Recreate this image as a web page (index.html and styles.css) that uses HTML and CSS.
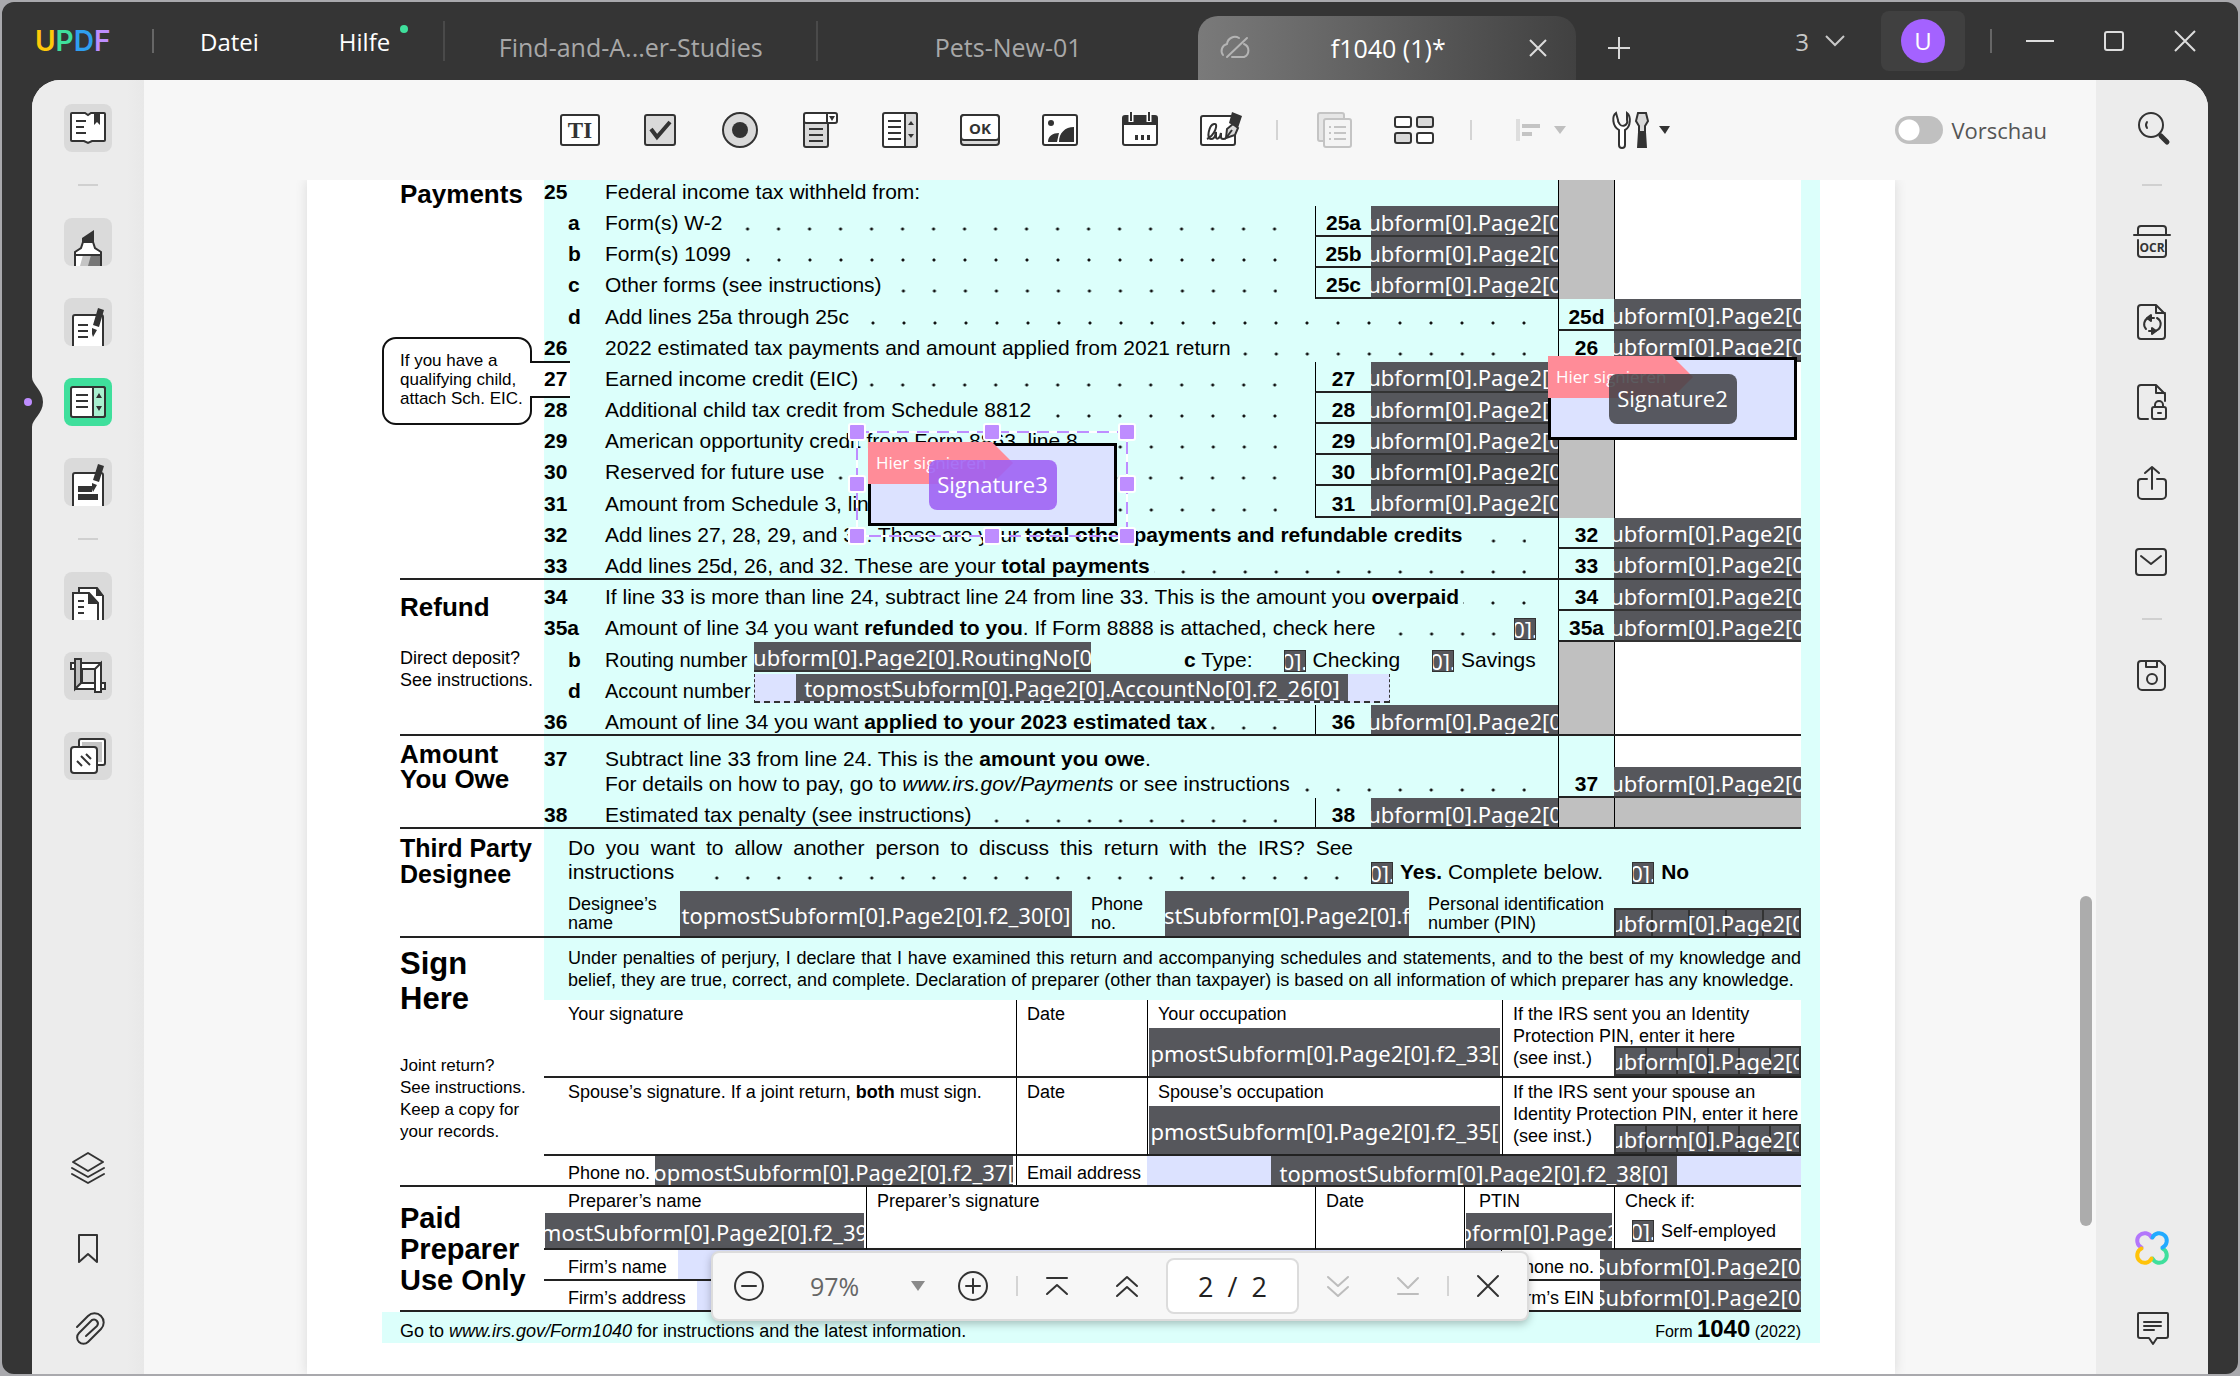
FILE: index.html
```html
<!DOCTYPE html>
<html lang="de">
<head>
    <meta charset="UTF-8">
    <meta name="viewport" content="width=device-width, initial-scale=1.0">
    <title>UPDF - f1040 (1)*</title>
    <link rel="stylesheet" href="styles.css">
</head>
<body>
<div class="window">
    <header class="titlebar">
        <div class="logo"><span class="c-u">U</span><span class="c-p">P</span><span class="c-d">D</span><span class="c-f">F</span></div>
        <span class="bar-sep"></span>
        <nav class="menu">
            <button type="button">Datei</button>
            <button type="button" class="has-dot">Hilfe</button>
        </nav>
        <div class="tabs">
            <button type="button" class="tab tab-wide">Find-and-A...er-Studies</button>
            <button type="button" class="tab">Pets-New-01</button>
            <div class="tab-active">
                <svg width="32" height="28" viewBox="0 0 32 28" fill="none" stroke="#b4b4b4" stroke-width="2" stroke-linecap="round"><path d="M20 4a8 8 0 0 0-12 6 7 7 0 0 0-4 11M8 23l20-19M25 10a7 7 0 0 1 0 13H13"/></svg>
                <button type="button" class="tab-name">f1040 (1)*</button>
                <button type="button" class="icon-btn" aria-label="Tab schließen"><svg width="18" height="18" viewBox="0 0 18 18" stroke="#ddd" stroke-width="2"><path d="M1 1l16 16M17 1L1 17"/></svg></button>
            </div>
            <button type="button" class="icon-btn add" aria-label="Neuer Tab"><svg width="24" height="24" viewBox="0 0 24 24" stroke="#d8d8d8" stroke-width="2"><path d="M12 1v22M1 12h22"/></svg></button>
        </div>
        <div class="win-ctl">
            <button type="button" class="count">3 <svg width="20" height="12" viewBox="0 0 20 12" fill="none" stroke="#c8c8c8" stroke-width="2"><path d="M1 1l9 9 9-9"/></svg></button>
            <button type="button" class="account"><span>U</span></button>
            <span class="bar-sep"></span>
            <button type="button" class="icon-btn" aria-label="Minimieren"><svg width="28" height="20" viewBox="0 0 28 20" stroke="#ddd" stroke-width="2"><path d="M0 10h28"/></svg></button>
            <button type="button" class="icon-btn" aria-label="Maximieren"><svg width="20" height="20" viewBox="0 0 20 20" fill="none" stroke="#ddd" stroke-width="2"><rect x="1" y="1" width="18" height="18" rx="2"/></svg></button>
            <button type="button" class="icon-btn" aria-label="Schließen"><svg width="22" height="22" viewBox="0 0 22 22" stroke="#ddd" stroke-width="2"><path d="M1 1l20 20M21 1L1 21"/></svg></button>
        </div>
    </header>

    <div class="body">
        <aside class="side left">
            <button type="button" class="tile" aria-label="Lesen"><svg viewBox="0 0 48 48"><path class="w" d="M8 9h13l3 2 3-2h13a1 1 0 0 1 1 1v26a1 1 0 0 1-1 1H28l-4 2-4-2H8a1 1 0 0 1-1-1V10a1 1 0 0 1 1-1z"/><path class="l" d="M12 17h10M12 23h8M12 29h10"/><path class="k" d="M30 9h6v12l-3-3-3 3z"/></svg></button>
            <span class="side-sep"></span>
            <button type="button" class="tile" aria-label="Kommentar"><svg viewBox="0 0 48 48"><path class="w" d="M11 48V34l6-4 2-6h10l2 6 6 4v14"/><path fill="#c4c4c4" d="M19 37h17v11H16z"/><path fill="#777" d="M27 37h9v11H24z"/><path class="l" d="M11 37h26"/><path class="k" d="M18 24v-4l12-8v12z"/></svg></button>
            <button type="button" class="tile" aria-label="PDF bearbeiten"><svg viewBox="0 0 48 48"><path class="w" d="M9 48V19a2 2 0 0 1 2-2h26a2 2 0 0 1 2 2v29"/><path class="l" d="M14 27h10M14 33h10M14 39h10"/><path class="k" d="M34 10l6 2-5 17-6-2zM28 30l5 2-4 7-1-3z"/></svg></button>
            <button type="button" class="tile active" aria-label="Formular"><svg viewBox="0 0 48 48"><rect class="w" x="7" y="9" width="34" height="30" rx="2"/><path fill="#a9f0d0" stroke="#333" stroke-width="2" d="M29 9h10a2 2 0 0 1 2 2v26a2 2 0 0 1-2 2H29z"/><path class="l" d="M12 17h12M12 23h12M12 29h12"/><path class="k" d="M32 20l3-5 3 5zM32 28l3 5 3-5z"/></svg></button>
            <button type="button" class="tile" aria-label="Schwärzen"><svg viewBox="0 0 48 48"><path class="w" d="M9 48V17a2 2 0 0 1 2-2h26a2 2 0 0 1 2 2v31"/><path class="k" d="M14 28h14v6H14zM14 36h20v6H14zM34 6l6 2-5 16-6-2zM28 25l5 2-4 7-1-3z"/></svg></button>
            <span class="side-sep"></span>
            <button type="button" class="tile" aria-label="Seiten"><svg viewBox="0 0 48 48"><path class="w" d="M15 48V16h18l6 8v24"/><path class="k" d="M32 15l8 9h-8z"/><path class="w" d="M9 48V21h16l9 10v17"/><path class="k" d="M24 20l10 12H24z"/><path class="l" d="M14 29h6M14 35h6M14 41h6"/></svg></button>
            <button type="button" class="tile" aria-label="Zuschneiden"><svg viewBox="0 0 48 48" fill="none" stroke="#333" stroke-width="2"><path d="M7 11h30v6H7z" fill="#fff"/><path d="M11 31h30v6H11z" fill="#fff"/><rect x="18" y="17" width="13" height="14" fill="#dadada"/><path d="M11 7h6v24l-6 6z" fill="#bdbdbd"/><path d="M31 17l6-6v29h-6z" fill="#fff"/></svg></button>
            <button type="button" class="tile" aria-label="Wasserzeichen"><svg viewBox="0 0 48 48"><rect class="w" x="15" y="7" width="26" height="26" rx="2"/><path fill="#c4c4c4" d="M18 10h20v20H18z"/><rect class="w" x="7" y="15" width="26" height="26" rx="3"/><path class="l" d="M13 29l5 5M17 24l9 9M22 22l5 5"/></svg></button>
            <span class="grow"></span>
            <button type="button" class="plain" aria-label="Ebenen"><svg viewBox="0 0 48 48" class="o"><path d="M24 9l15 9-15 9-15-9zM8 24l16 9 16-9M8 30l16 9 16-9"/></svg></button>
            <button type="button" class="plain" aria-label="Lesezeichen"><svg viewBox="0 0 48 48" class="o"><path d="M15 11h18v27l-9-8-9 8z"/></svg></button>
            <button type="button" class="plain" aria-label="Anhang"><svg viewBox="0 0 48 48" class="o"><path d="M13 23l11-11a9 9 0 0 1 13 13L24 38a6 6 0 0 1-9-9l13-13a4 4 0 0 1 5 6L22 32"/></svg></button>
            <svg class="notch" viewBox="0 0 20 50"><path fill="#353535" d="M6 0c0 8 11 13 11 25S6 42 6 50z"/><circle cx="2" cy="25" r="4" fill="#be8dff"/></svg>
        </aside>

        <main class="main">
            <div class="toolbar">
                <div class="tools">
                    <button type="button" class="plain" aria-label="Textfeld"><svg viewBox="0 0 48 48"><rect class="w" x="5" y="9" width="38" height="30" rx="2"/><text x="24" y="32" text-anchor="middle" class="ti">TI</text></svg></button>
                    <button type="button" class="plain" aria-label="Kontrollkästchen"><svg viewBox="0 0 48 48"><rect class="g" x="9" y="9" width="30" height="30" rx="2"/><path d="M15 23l6 8 13-15" fill="none" stroke="#333" stroke-width="4"/></svg></button>
                    <button type="button" class="plain" aria-label="Optionsfeld"><svg viewBox="0 0 48 48"><circle class="g" cx="24" cy="24" r="17"/><circle class="k" cx="24" cy="24" r="8"/></svg></button>
                    <button type="button" class="plain" aria-label="Dropdown-Liste"><svg viewBox="0 0 48 48"><rect class="g" x="8" y="12" width="24" height="29" rx="2"/><rect class="w" x="8" y="7" width="33" height="10" rx="2"/><path class="l" d="M31 7v10M13 23h14M13 29h14M13 35h14"/><path class="k" d="M33 10h6l-3 5z"/></svg></button>
                    <button type="button" class="plain" aria-label="Listenfeld"><svg viewBox="0 0 48 48"><rect class="w" x="7" y="7" width="34" height="34" rx="2"/><path class="g" d="M29 7h10a2 2 0 0 1 2 2v30a2 2 0 0 1-2 2H29z"/><path class="l" d="M12 15h13M12 21h13M12 27h13M12 33h13"/><path class="k" d="M32 19l3-4 3 4zM32 28l3 4 3-4z"/></svg></button>
                    <button type="button" class="plain" aria-label="Schaltfläche"><svg viewBox="0 0 48 48"><rect class="g" x="5" y="9" width="38" height="30" rx="3"/><rect class="w" x="5" y="9" width="38" height="25" rx="3"/><text x="24" y="28" text-anchor="middle" class="ok">OK</text></svg></button>
                    <button type="button" class="plain" aria-label="Bild"><svg viewBox="0 0 48 48"><rect class="w" x="7" y="9" width="34" height="30" rx="2"/><circle class="k" cx="15" cy="17" r="3"/><path class="k" d="M12 36c0-6 5-9 11-9l-2 9zM23 36c0-9 6-15 15-15v15z"/></svg></button>
                    <button type="button" class="plain" aria-label="Datum"><svg viewBox="0 0 48 48"><rect class="w" x="7" y="10" width="34" height="29" rx="2"/><path class="k" d="M7 10h34v9H7z"/><path d="M15 6v10M33 6v10" stroke="#fff" stroke-width="5"/><path class="l" d="M15 6v9M33 6v9"/><path class="k" d="M19 29h3v5h-3zM25 29h3v5h-3zM31 29h3v5h-3z"/></svg></button>
                    <button type="button" class="plain" aria-label="Signatur"><svg viewBox="0 0 48 48"><rect class="w" x="5" y="10" width="34" height="29" rx="2"/><path class="l" d="M11 33c8-4 12-16 7-15s-8 15-3 15 4-5 5-7v5c0 3 4 2 5-4v4c0 3 4 2 5 1"/><path class="g" d="M30 32l1-9 6-5 5 4-3 7z"/><path class="l" d="M30 32l6-8"/><path class="k" d="M36 6l10 4-4 12-9-5z"/></svg></button>
                </div>
                <span class="tool-sep"></span>
                <div class="tools">
                    <button type="button" class="plain" aria-label="Duplizieren"><svg viewBox="0 0 48 48" stroke="#c4c4c4" stroke-width="2"><rect x="8" y="7" width="26" height="28" rx="2" fill="#e6e6e6"/><rect x="14" y="13" width="27" height="28" rx="2" fill="#f4f4f4"/><path d="M19 21h2M19 27h2M19 33h2M24 21h12M24 27h12M24 33h12"/></svg></button>
                    <button type="button" class="plain" aria-label="Raster"><svg viewBox="0 0 48 48"><rect class="w" x="5" y="11" width="16" height="10" rx="2"/><rect class="g" x="27" y="11" width="16" height="10" rx="2"/><rect class="g" x="5" y="27" width="16" height="10" rx="2"/><rect class="w" x="27" y="27" width="16" height="10" rx="2"/></svg></button>
                </div>
                <span class="tool-sep"></span>
                <div class="tools">
                    <button type="button" class="plain with-arrow" aria-label="Ausrichten"><svg viewBox="0 0 72 48"><path d="M14 13v22" stroke="#dedede" stroke-width="4"/><path d="M18 18h18v4H18zM18 26h10v4H18z" fill="#c4c4c4"/><path d="M50 20h12l-6 8z" fill="#c0c0c0"/></svg></button>
                    <button type="button" class="plain with-arrow" aria-label="Werkzeuge"><svg viewBox="0 0 72 48"><path class="w" d="M8 7c-4 3-4 13 3 17v15a3 3 0 0 0 6 0V24c6-3 6-14 2-17v7a4 4 0 0 1-8 3 4 4 0 0 1-1-3z"/><path class="g" d="M30 7h8l2 8-3 5v6h-6v-6l-3-5z"/><path class="k" d="M30 26h8l1 16H29zM51 20h11l-5 8z"/></svg></button>
                </div>
                <label class="preview"><input type="checkbox"> Vorschau</label>
            </div>

            <div class="viewport">
                <article class="paper">
                    <div class="form">

                        <section class="part payments">
                            <div class="part-side">
                                <h2>Payments</h2>
                                <p class="callout">If you have a<br>qualifying child,<br>attach Sch. EIC.</p>
                            </div>
                            <div class="lines">
                                <div class="line"><b class="no">25</b><div class="txt wide">Federal income tax withheld from:</div><div class="shade"></div><div class="blank"></div></div>
                                <div class="line"><b class="no sub">a</b><div class="txt"><span>Form(s) W-2</span><i class="dots"></i></div><b class="box">25a</b><div class="field"><span>ubform[0].Page2[0</span></div><div class="shade"></div><div class="blank"></div></div>
                                <div class="line"><b class="no sub">b</b><div class="txt"><span>Form(s) 1099</span><i class="dots"></i></div><b class="box">25b</b><div class="field"><span>ubform[0].Page2[0</span></div><div class="shade"></div><div class="blank"></div></div>
                                <div class="line"><b class="no sub">c</b><div class="txt"><span>Other forms (see instructions)</span><i class="dots"></i></div><b class="box">25c</b><div class="field"><span>ubform[0].Page2[0</span></div><div class="shade"></div><div class="blank"></div></div>
                                <div class="line"><b class="no sub">d</b><div class="txt wide"><span>Add lines 25a through 25c</span><i class="dots"></i></div><b class="box">25d</b><div class="field"><span>ubform[0].Page2[0</span></div></div>
                                <div class="line"><b class="no">26</b><div class="txt wide"><span>2022 estimated tax payments and amount applied from 2021 return</span><i class="dots"></i></div><b class="box">26</b><div class="field"><span>ubform[0].Page2[0</span></div></div>
                                <div class="line"><b class="no">27</b><div class="txt"><span>Earned income credit (EIC)</span><i class="dots"></i></div><b class="box">27</b><div class="field"><span>ubform[0].Page2[0</span></div><div class="shade"></div><div class="blank"></div></div>
                                <div class="line"><b class="no">28</b><div class="txt"><span>Additional child tax credit from Schedule 8812</span><i class="dots"></i></div><b class="box">28</b><div class="field"><span>ubform[0].Page2[0</span></div><div class="shade"></div><div class="blank"></div></div>
                                <div class="line"><b class="no">29</b><div class="txt"><span>American opportunity credit from Form 8863, line 8</span><i class="dots"></i></div><b class="box">29</b><div class="field"><span>ubform[0].Page2[0</span></div><div class="shade"></div><div class="blank"></div></div>
                                <div class="line"><b class="no">30</b><div class="txt"><span>Reserved for future use</span><i class="dots"></i></div><b class="box">30</b><div class="field readonly"><span>ubform[0].Page2[0</span></div><div class="shade"></div><div class="blank"></div></div>
                                <div class="line"><b class="no">31</b><div class="txt"><span>Amount from Schedule 3, line 15</span><i class="dots"></i></div><b class="box">31</b><div class="field"><span>ubform[0].Page2[0</span></div><div class="shade"></div><div class="blank"></div></div>
                                <div class="line"><b class="no">32</b><div class="txt wide"><span>Add lines 27, 28, 29, and 31. These are your <b>total other payments and refundable credits</b></span><i class="dots"></i></div><b class="box">32</b><div class="field"><span>ubform[0].Page2[0</span></div></div>
                                <div class="line"><b class="no">33</b><div class="txt wide"><span>Add lines 25d, 26, and 32. These are your <b>total payments</b></span><i class="dots"></i></div><b class="box">33</b><div class="field"><span>ubform[0].Page2[0</span></div></div>
                            </div>
                        </section>

                        <section class="part refund">
                            <div class="part-side">
                                <h2>Refund</h2>
                                <p>Direct deposit?<br>See instructions.</p>
                            </div>
                            <div class="lines">
                                <div class="line"><b class="no">34</b><div class="txt wide"><span>If line 33 is more than line 24, subtract line 24 from line 33. This is the amount you <b>overpaid</b></span><i class="dots"></i></div><b class="box">34</b><div class="field"><span>ubform[0].Page2[0</span></div></div>
                                <div class="line"><b class="no">35a</b><div class="txt wide with-check"><span>Amount of line 34 you want <b>refunded to you</b>. If Form 8888 is attached, check here</span><i class="dots"></i><div class="field check"><span>0].</span></div></div><b class="box">35a</b><div class="field"><span>ubform[0].Page2[0</span></div></div>
                                <div class="line"><b class="no sub">b</b><div class="txt wide">
                                    <span class="acct">Routing number</span>
                                    <div class="field routing"><span>ubform[0].Page2[0].RoutingNo[0</span></div>
                                    <span class="type"><b>c</b> Type:</span>
                                    <div class="field check"><span>0].</span></div><span class="opt">Checking</span>
                                    <div class="field check"><span>0].</span></div><span class="opt">Savings</span>
                                </div><div class="shade"></div><div class="blank"></div></div>
                                <div class="line"><b class="no sub">d</b><div class="txt wide">
                                    <span class="acct">Account number</span>
                                    <div class="tint account-no"><div class="field hug"><span>topmostSubform[0].Page2[0].AccountNo[0].f2_26[0]</span></div></div>
                                </div><div class="shade"></div><div class="blank"></div></div>
                                <div class="line"><b class="no">36</b><div class="txt"><span>Amount of line 34 you want <b>applied to your 2023 estimated tax</b></span><i class="dots"></i></div><b class="box">36</b><div class="field"><span>ubform[0].Page2[0</span></div><div class="shade"></div><div class="blank"></div></div>
                            </div>
                        </section>

                        <section class="part owe">
                            <div class="part-side">
                                <h2>Amount<br>You Owe</h2>
                            </div>
                            <div class="lines">
                                <div class="line two-line"><b class="no">37</b><div class="txt wide"><span>Subtract line 33 from line 24. This is the <b>amount you owe</b>.</span></div><div class="box open"></div><div class="blank"></div></div>
                                <div class="line"><span class="no"></span><div class="txt wide"><span>For details on how to pay, go to <em>www.irs.gov/Payments</em> or see instructions</span><i class="dots"></i></div><b class="box">37</b><div class="field"><span>ubform[0].Page2[0</span></div></div>
                                <div class="line"><b class="no">38</b><div class="txt"><span>Estimated tax penalty (see instructions)</span><i class="dots"></i></div><b class="box">38</b><div class="field"><span>ubform[0].Page2[0</span></div><div class="shade"></div><div class="shade"></div></div>
                            </div>
                        </section>

                        <section class="part designee">
                            <div class="part-side">
                                <h2>Third Party<br>Designee</h2>
                            </div>
                            <div class="designee-main">
                                <div class="question">
                                    <div class="ask"><span class="spread">Do you want to allow another person to discuss this return with the IRS? See</span>
                                        <div class="ask-end"><span>instructions</span><i class="dots"></i></div></div>
                                    <div class="answer">
                                        <div class="field check"><span>0].</span></div><span class="yes"><b>Yes.</b> Complete below.</span>
                                        <div class="field check"><span>0].</span></div><b class="opt">No</b>
                                    </div>
                                </div>
                                <div class="who">
                                    <span class="small">Designee’s<br>name</span>
                                    <div class="field"><span>topmostSubform[0].Page2[0].f2_30[0]</span></div>
                                    <span class="small">Phone<br>no.</span>
                                    <div class="field"><span>stSubform[0].Page2[0].f</span></div>
                                    <span class="small">Personal identification<br>number (PIN)</span>
                                    <div class="field comb comb-5"><span>ubform[0].Page2[0</span></div>
                                </div>
                            </div>
                        </section>

                        <section class="part sign">
                            <div class="part-side">
                                <h2>Sign<br>Here</h2>
                                <p>Joint return?<br>See instructions.<br>Keep a copy for<br>your records.</p>
                            </div>
                            <div>
                                <div class="oath">
                                    <span class="spread">Under penalties of perjury, I declare that I have examined this return and accompanying schedules and statements, and to the best of my knowledge and</span>
                                    <span>belief, they are true, correct, and complete. Declaration of preparer (other than taxpayer) is based on all information of which preparer has any knowledge.</span>
                                </div>
                                <div class="sign-row">
                                    <div>Your signature</div>
                                    <div>Date</div>
                                    <div>Your occupation<div class="field under"><span>pmostSubform[0].Page2[0].f2_33[</span></div></div>
                                    <div>If the IRS sent you an Identity<br>Protection PIN, enter it here<br>(see inst.)<div class="field comb pin"><span>ubform[0].Page2[0</span></div></div>
                                </div>
                                <div class="sign-row">
                                    <div>Spouse’s signature. If a joint return, <b>both</b> must sign.</div>
                                    <div>Date</div>
                                    <div>Spouse’s occupation<div class="field under"><span>pmostSubform[0].Page2[0].f2_35[</span></div></div>
                                    <div>If the IRS sent your spouse an<br>Identity Protection PIN, enter it here<br>(see inst.)<div class="field comb pin"><span>ubform[0].Page2[0</span></div></div>
                                </div>
                                <div class="contact">
                                    <div class="contact-phone">Phone no.<div class="field"><span>opmostSubform[0].Page2[0].f2_37[</span></div></div>
                                    <div class="contact-mail">Email address</div>
                                    <div class="tint"><div class="field hug"><span>topmostSubform[0].Page2[0].f2_38[0]</span></div></div>
                                </div>
                            </div>
                        </section>

                        <section class="part paid">
                            <div class="part-side">
                                <h2>Paid<br>Preparer<br>Use Only</h2>
                            </div>
                            <div class="paid-main">
                                <div class="paid-row">
                                    <div>Preparer’s name<div class="field under"><span>mostSubform[0].Page2[0].f2_39</span></div></div>
                                    <div>Preparer’s signature</div>
                                    <div>Date</div>
                                    <div>PTIN<div class="field under"><span>bform[0].Page2</span></div></div>
                                    <div>Check if:<div class="self"><div class="field check"><span>0].</span></div><span class="opt">Self-employed</span></div></div>
                                </div>
                                <div class="firm"><span>Firm’s name</span><div class="tint"></div><span class="firm-r">Phone no.</span><div class="field"><span>Subform[0].Page2[0]</span></div></div>
                                <div class="firm"><span>Firm’s address</span><div class="tint"></div><span class="firm-r">Firm’s EIN</span><div class="field"><span>Subform[0].Page2[0]</span></div></div>
                            </div>
                        </section>

                        <footer class="form-foot">
                            <span>Go to <em>www.irs.gov/Form1040</em> for instructions and the latest information.</span>
                            <span class="form-id">Form <b>1040</b> (2022)</span>
                        </footer>
                    </div>

                    <!-- signature fields placed on the page -->
                    <div class="sig sig-2"><span class="sig-tag">Hier signieren</span><span class="sig-name">Signature2</span></div>
                    <div class="sig sig-3"><span class="sig-tag">Hier signieren</span><span class="sig-name">Signature3</span>
                        <svg class="handles" viewBox="0 0 290 124">
                            <rect x="10" y="10" width="270" height="104" fill="none" stroke="#fff" stroke-width="2"/>
                            <rect x="10" y="10" width="270" height="104" fill="none" stroke="#be8dff" stroke-width="2" stroke-dasharray="12 8"/>
                            <g fill="#be8dff" stroke="#fff" stroke-width="2">
                                <rect x="2" y="2" width="16" height="16" rx="2"/><rect x="137" y="2" width="16" height="16" rx="2"/><rect x="272" y="2" width="16" height="16" rx="2"/>
                                <rect x="2" y="54" width="16" height="16" rx="2"/><rect x="272" y="54" width="16" height="16" rx="2"/>
                                <rect x="2" y="106" width="16" height="16" rx="2"/><rect x="137" y="106" width="16" height="16" rx="2"/><rect x="272" y="106" width="16" height="16" rx="2"/>
                            </g>
                        </svg>
                    </div>
                </article>
                <div class="scroll-thumb"></div>
            </div>

            <div class="pager">
                <button type="button" class="icon-btn" aria-label="Verkleinern"><svg width="32" height="32" viewBox="0 0 32 32" class="o"><circle cx="16" cy="16" r="14"/><path d="M9 16h14"/></svg></button>
                <label class="zoom"><select aria-label="Zoom"><option>97%</option></select><svg width="14" height="10" viewBox="0 0 14 10"><path d="M0 0h14L7 10z" fill="#8a8a8a"/></svg></label>
                <button type="button" class="icon-btn" aria-label="Vergrößern"><svg width="32" height="32" viewBox="0 0 32 32" class="o"><circle cx="16" cy="16" r="14"/><path d="M9 16h14M16 9v14"/></svg></button>
                <span class="pager-sep"></span>
                <button type="button" class="icon-btn" aria-label="Erste Seite"><svg width="24" height="24" viewBox="0 0 24 24" class="o"><path d="M2 4h20M2 20l10-9 10 9"/></svg></button>
                <button type="button" class="icon-btn" aria-label="Vorherige Seite"><svg width="24" height="24" viewBox="0 0 24 24" class="o"><path d="M2 12L12 3l10 9M2 22l10-9 10 9"/></svg></button>
                <input class="page-no" type="text" value="2  /  2" aria-label="Seite">
                <button type="button" class="icon-btn off" aria-label="Nächste Seite"><svg width="24" height="24" viewBox="0 0 24 24" class="o"><path d="M2 3l10 9 10-9M2 13l10 9 10-9"/></svg></button>
                <button type="button" class="icon-btn off" aria-label="Letzte Seite"><svg width="24" height="24" viewBox="0 0 24 24" class="o"><path d="M2 20h20M2 4l10 10L22 4"/></svg></button>
                <span class="pager-sep"></span>
                <button type="button" class="icon-btn" aria-label="Leiste schließen"><svg width="24" height="24" viewBox="0 0 24 24" class="o"><path d="M2 2l20 20M22 2L2 22"/></svg></button>
            </div>
        </main>

        <aside class="side right">
            <button type="button" class="plain" aria-label="Suchen"><svg viewBox="0 0 48 48" class="o"><circle cx="23" cy="21" r="12"/><path d="M19 18q-2 3 0 6"/><path d="M33 32l6 6" stroke-width="5"/></svg></button>
            <span class="side-sep"></span>
            <button type="button" class="plain" aria-label="OCR"><svg viewBox="0 0 48 48" class="o"><path d="M10 16V11a3 3 0 0 1 3-3h22a3 3 0 0 1 3 3v5M6 17h36M10 22v14a3 3 0 0 0 3 3h22a3 3 0 0 0 3-3V22"/><text x="24" y="34" text-anchor="middle" class="ocr">OCR</text></svg></button>
            <button type="button" class="plain" aria-label="Konvertieren"><svg viewBox="0 0 48 48" class="o"><path d="M28 7H13a3 3 0 0 0-3 3v28a3 3 0 0 0 3 3h21a3 3 0 0 0 3-3V16zM28 7v8h9"/><path d="M18 31a7 7 0 0 1 2-11h6M29 20a7 7 0 0 1-2 13h-6"/><path fill="#333" d="M19 20l4-3v6zM28 33l-4-3v6z"/></svg></button>
            <button type="button" class="plain" aria-label="Schützen"><svg viewBox="0 0 48 48" class="o"><path d="M37 23v-7l-9-9H13a3 3 0 0 0-3 3v28a3 3 0 0 0 3 3h7M28 7v8h9"/><rect x="24" y="29" width="14" height="12" rx="2"/><path d="M27 29v-2a4 4 0 0 1 8 0v2M30 35h3"/></svg></button>
            <button type="button" class="plain" aria-label="Teilen"><svg viewBox="0 0 48 48" class="o"><path d="M19 21h-6a3 3 0 0 0-3 3v13a4 4 0 0 0 4 4h20a4 4 0 0 0 4-4V24a3 3 0 0 0-3-3h-6M24 31V9M17 15l7-6 7 6"/></svg></button>
            <button type="button" class="plain" aria-label="E-Mail"><svg viewBox="0 0 48 48" class="o"><rect x="8" y="11" width="30" height="26" rx="3"/><path d="M13 18l10 8 10-8"/></svg></button>
            <span class="side-sep"></span>
            <button type="button" class="plain" aria-label="Speichern"><svg viewBox="0 0 48 48" class="o"><path d="M13 9h19l5 5v20a4 4 0 0 1-4 4H14a4 4 0 0 1-4-4V12a3 3 0 0 1 3-3zM18 9v6h11V9"/><circle cx="24" cy="27" r="5"/></svg></button>
            <span class="grow"></span>
            <button type="button" class="plain" aria-label="UPDF AI"><svg viewBox="0 0 48 48" fill="none" stroke-width="4" stroke-linecap="round"><path stroke="#b377fb" d="M13.5 23.5A7.5 7.5 0 1 1 23.5 13.5"/><path stroke="#3fdf9c" d="M34.5 24.5A7.5 7.5 0 1 1 24.5 34.5"/><path stroke="#22aaff" d="M24.5 13.5A7.5 7.5 0 1 1 34.5 23.5"/><path stroke="#ffc30a" d="M23.5 34.5A7.5 7.5 0 1 1 13.5 24.5"/></svg></button>
            <button type="button" class="plain" aria-label="Kommentare"><svg viewBox="0 0 48 48" class="o"><path d="M11 9h28a1 1 0 0 1 1 1v22a2 2 0 0 1-2 2h-9l-4 6-4-6h-9a2 2 0 0 1-2-2V10a1 1 0 0 1 1-1zM16 18h17M16 22h17M16 26h10"/></svg></button>
        </aside>
    </div>
</div>
</body>
</html>
```
FILE: styles.css
```css
* {
    box-sizing: border-box;
}

body {
    margin: 0;
    background-color: #a9a9ad;
    font-family: "Open Sans", "Noto Sans", sans-serif;
    font-size: 24px;
    color: #333;
}

button, input, select {
    font: inherit;
    color: inherit;
    background: none;
    border: none;
    padding: 0;
    margin: 0;
}

h2, p {
    margin: 0;
}

svg {
    display: block;
    flex: none;
    overflow: visible;
}

/* icon strokes */
.w { fill: #fff; stroke: #333; stroke-width: 2; }
.g { fill: #d9d9d9; stroke: #333; stroke-width: 2; }
.k { fill: #333; }
.l { fill: none; stroke: #333; stroke-width: 2; }
.o { fill: none; stroke: #333; stroke-width: 2; stroke-linejoin: round; stroke-linecap: round; }
.ti { font: bold 23px "Liberation Serif", serif; fill: #333; }
.ok { font: bold 15px "Open Sans", sans-serif; fill: #333; }
.ocr { font: bold 12px "Open Sans", sans-serif; fill: #333; stroke: none; }

.window {
    height: 100vh;
    border: 2px solid #a9a9ad;
    border-radius: 14px;
    background-color: #353535;
    display: flex;
    flex-direction: column;
    overflow: hidden;
}

/* title bar */
.titlebar {
    height: 78px;
    flex: none;
    display: flex;
    align-items: center;
    color: #fff;
}

.logo {
    font: 600 28px Inter, sans-serif;
    margin-left: 33px;
    width: 117px;
}

.c-u { color: #ffc90a; }
.c-p { color: #3fdf9c; }
.c-d { color: #2f9ff0; }
.c-f { color: #be8dff; }

.bar-sep {
    width: 2px;
    height: 24px;
    background-color: #666;
}

.menu {
    display: flex;
    gap: 80px;
    margin-left: 46px;
}

.has-dot {
    position: relative;
}

.has-dot::after {
    content: "";
    position: absolute;
    right: -18px;
    top: 0;
    width: 8px;
    height: 8px;
    border-radius: 50%;
    background-color: #3fdf9c;
}

.tabs {
    flex: 1;
    align-self: stretch;
    display: flex;
    align-items: center;
    padding-top: 14px;
    margin-left: 53px;
    font-size: 25px;
}

.tab {
    height: 40px;
    width: 382px;
    margin-bottom: 14px;
    padding-top: 9px;
    border-left: 2px solid #4a4a4a;
    color: #a8a8a8;
}

.tab-wide {
    width: 373px;
}

.tab-active {
    align-self: stretch;
    width: 378px;
    padding: 0 29px 0 21px;
    border-radius: 20px 20px 0 0;
    background: linear-gradient(90deg, #7a7a7a, #414141);
    display: flex;
    align-items: center;
    justify-content: space-between;
}

.tab-name {
    padding-right: 4px;
}

.icon-btn {
    display: flex;
}

.add {
    margin-left: 31px;
}

.win-ctl {
    display: flex;
    align-items: center;
    padding-right: 42px;
}

.count {
    display: flex;
    align-items: center;
    gap: 16px;
    color: #c8c8c8;
    margin-right: 36px;
}

.account {
    width: 84px;
    height: 60px;
    border-radius: 8px;
    background-color: #404040;
    display: flex;
    align-items: center;
    justify-content: center;
    margin-right: 25px;
}

.account span {
    width: 44px;
    line-height: 44px;
    border-radius: 50%;
    background-color: #a462ff;
}

.win-ctl .bar-sep {
    margin-right: 34px;
}

.win-ctl .icon-btn + .icon-btn {
    margin-left: 50px;
}

/* body */
.body {
    flex: 1;
    min-height: 0;
    margin: 0 30px;
    border-radius: 28px 28px 0 0;
    background-color: #f7f7f7;
    display: flex;
}

.side {
    width: 112px;
    flex: none;
    display: flex;
    flex-direction: column;
    align-items: center;
    gap: 32px;
    padding: 24px 0 22px;
    background-color: #ececec;
}

.left {
    position: relative;
    border-radius: 28px 0 0 0;
    background: linear-gradient(90deg, #ececec 85%, #e8e8e8);
}

.right {
    border-radius: 0 28px 0 0;
}

.side-sep {
    width: 20px;
    height: 2px;
    background-color: #d0d0d0;
}

.tile, .plain {
    width: 48px;
    height: 48px;
    flex: none;
    border-radius: 8px;
}

.tile {
    background-color: #dadada;
    overflow: hidden;
}

.tile.active {
    background-color: #3fdf9c;
}

.with-arrow {
    width: 72px;
}

.grow {
    flex: 1;
}

.notch {
    position: absolute;
    left: -6px;
    top: 297px;
    width: 20px;
    height: 50px;
}

.main {
    flex: 1;
    min-width: 0;
    position: relative;
    display: flex;
    flex-direction: column;
}

.toolbar {
    height: 100px;
    flex: none;
    display: flex;
    align-items: center;
    padding: 0 49px 0 412px;
}

.tools {
    display: flex;
    gap: 32px;
}

.tool-sep {
    width: 2px;
    height: 20px;
    background-color: #d4d4d4;
    margin: 0 32px;
}

.preview {
    margin-left: auto;
    display: flex;
    align-items: center;
    gap: 8px;
    font-size: 22px;
    color: #555;
}

.preview input {
    appearance: none;
    width: 48px;
    height: 28px;
    border-radius: 14px;
    background: radial-gradient(circle at 14px 14px, #fff 10px, #c0c0c0 11px);
}

.viewport {
    flex: 1;
    min-height: 0;
    position: relative;
    overflow: hidden;
    display: flex;
    justify-content: center;
    padding-right: 38px;
}

.scroll-thumb {
    position: absolute;
    right: 4px;
    top: 60%;
    width: 12px;
    height: 330px;
    border-radius: 6px;
    background-color: #acacac;
}

/* paper */
.paper {
    position: relative;
    width: 1588px;
    flex: none;
    padding: 0 75px;
    background-color: #fff;
    box-shadow: 0 0 12px rgba(0, 0, 0, 0.12);
    font-family: "Liberation Sans", Arial, sans-serif;
    font-size: 21px;
    line-height: 24px;
    color: #000;
}

.part {
    display: grid;
    grid-template-columns: 162px 1fr;
    padding-right: 19px;
    position: relative;
    background: linear-gradient(90deg, #fff 162px, #dcfffb 162px);
}

/* rule under each part */
.part::after {
    content: "";
    position: absolute;
    left: 18px;
    right: 19px;
    bottom: 0;
    height: 2px;
    background-color: #222;
}

.part-side {
    padding-left: 18px;
    font-size: 18px;
    white-space: nowrap;
}

h2 {
    font-size: 26px;
    line-height: 26px;
}

.payments h2 {
    padding-top: 1px;
}

.lines {
    display: grid;
}

.line {
    display: grid;
    grid-template-columns: 61px 1fr 56px 187px 56px 187px;
}

.payments .lines {
    height: 400px;
    grid-template-rows: 26px repeat(12, 1fr);
}

.refund .lines {
    height: 156px;
    grid-template-rows: repeat(5, 1fr);
}

.owe .lines {
    height: 93px;
    grid-template-rows: repeat(3, 1fr);
}

.no, .txt, .box {
    display: flex;
    align-items: flex-end;
    padding-bottom: 2px;
    white-space: nowrap;
}

.no {
    position: relative;
    z-index: 1;
}

.sub {
    padding-left: 24px;
}

.wide {
    grid-column: 2 / 5;
}

.dots {
    flex: 1;
    height: 24px;
    margin: 0 38px 0 4px;
    background: radial-gradient(circle at 29px 18px, #111 1px, transparent 2px) right / 31px 100%;
}

.wide .dots {
    margin-right: 32px;
}

.box {
    justify-content: center;
    border-left: 1px solid #000;
    border-bottom: 2px solid #222;
    padding-bottom: 0;
}

.box.open {
    border-bottom: none;
}

.shade {
    background-color: #c0c0c0;
    border-left: 1px solid #000;
}

.blank {
    background-color: #fff;
    border-left: 1px solid #000;
}

.field {
    display: flex;
    align-items: center;
    justify-content: center;
    overflow: hidden;
    min-width: 0;
    background-color: #56575c;
    border-bottom: 2px solid #333;
    padding-top: 2px;
    color: #fff;
    font: 22px/26px "Noto Sans", "Open Sans", sans-serif;
    white-space: nowrap;
}

.field span {
    flex: none;
}

.readonly {
    background-color: #4a4b4e;
}

.check {
    width: 22px;
    height: 22px;
    flex: none;
    border: 1px solid #333;
    padding: 0;
    line-height: 20px;
}

.tint {
    background-color: #dce2ff;
    display: flex;
    justify-content: center;
}

.hug {
    padding: 0 8px;
}

.callout {
    position: absolute;
    left: 0;
    top: 157px;
    width: 150px;
    height: 88px;
    padding: 12px 0 0 16px;
    border: 2px solid #111;
    border-radius: 14px;
    background-color: #fff;
    font-size: 17px;
    line-height: 19px;
}

.callout::after {
    content: "";
    position: absolute;
    left: 146px;
    top: 22px;
    width: 40px;
    height: 33px;
    border: solid #111;
    border-width: 2px 0;
    background-color: #fff;
}

.refund .part-side {
    padding-top: 14px;
}

.refund p {
    margin-top: 27px;
    line-height: 22px;
}

.with-check .dots {
    margin-right: 18px;
}

.with-check .check {
    margin: 0 22px 0 0;
}

.acct {
    width: 149px;
    font-size: 20px;
}

.routing {
    width: 337px;
    height: 30px;
}

.type {
    margin: 0 31px 0 93px;
}

.opt {
    margin-left: 7px;
}

.opt + .check {
    margin-left: 32px;
}

.account-no {
    width: 636px;
    height: 29px;
    border: 1px dashed #333;
    border-width: 0 1px 2px;
}

.txt .hug {
    border-bottom: none;
}

.owe .part-side {
    padding-top: 6px;
}

.owe h2 {
    line-height: 25px;
}

.owe .two-line .no, .owe .two-line .txt {
    margin-bottom: -6px;
}

/* third party designee */
.designee .part-side {
    padding-top: 6px;
}

.designee h2 {
    font-size: 25px;
}

.designee-main {
    height: 109px;
    padding-left: 24px;
    display: flex;
    flex-direction: column;
    justify-content: space-between;
}

.question {
    display: flex;
    padding-top: 7px;
    white-space: nowrap;
}

.ask {
    width: 785px;
}

.spread {
    display: block;
    text-align-last: justify;
}

.ask-end {
    display: flex;
}

.ask-end .dots {
    margin: 0 14px 0 24px;
}

.answer {
    display: flex;
    align-items: flex-end;
    margin-left: 18px;
}

.yes {
    margin: 0 29px 0 7px;
}

.who {
    display: grid;
    grid-template-columns: 112px 392px 19px 74px 244px 19px 186px 187px;
    height: 47px;
}

.who .small:nth-of-type(2) { grid-column: 4; }
.who .small:nth-of-type(3) { grid-column: 7; }

.small {
    font-size: 18px;
    line-height: 19px;
    padding-top: 4px;
    white-space: nowrap;
}

.who .comb {
    align-self: end;
    height: 30px;
}

.comb {
    padding-top: 0;
    border: 2px solid #333;
    background-image: repeating-linear-gradient(90deg, transparent 0 29px, #333 29px 31px);
}

.comb-5 {
    background-image: repeating-linear-gradient(90deg, transparent 0 35px, #333 35px 37px);
}

/* sign here */
.sign .part-side {
    padding-top: 8px;
    font-size: 17px;
    line-height: 22px;
}

.sign h2 {
    font-size: 31px;
    line-height: 35px;
    margin-bottom: 39px;
}

.oath {
    height: 62px;
    padding: 9px 0 0 24px;
    font-size: 18px;
    line-height: 22px;
    white-space: nowrap;
}

.sign-row {
    display: grid;
    grid-template-columns: 472px 131px 355px 1fr;
    height: 78px;
}

.sign-row, .contact, .paid-main {
    background-color: #fff;
    font-size: 18px;
    line-height: 22px;
    white-space: nowrap;
}

.sign-row > div, .paid-row > div {
    position: relative;
    padding: 3px 0 0 10px;
    border-left: 1px solid #000;
    border-bottom: 2px solid #222;
}

.sign-row > div:first-child, .paid-row > div:first-child {
    padding-left: 24px;
    border-left: none;
}

/* fields that fill the bottom of their cell */
.under {
    position: absolute;
    left: 1px;
    right: 2px;
    bottom: 0;
    height: 48px;
    border: none;
}

.pin {
    position: absolute;
    right: 0;
    bottom: 0;
    width: 187px;
    height: 30px;
}

.contact {
    display: grid;
    grid-template-columns: 472px 131px 1fr;
    height: 31px;
    line-height: 35px;
}

.contact-phone {
    display: flex;
    justify-content: space-between;
    padding: 0 3px 0 24px;
}

.contact-phone .field {
    width: 358px;
    height: 31px;
}

.contact-mail {
    padding-left: 10px;
    border-left: 1px solid #000;
}

/* paid preparer */
.paid .part-side {
    padding-top: 16px;
}

.paid h2 {
    font-size: 29px;
    line-height: 31px;
}

.paid-row {
    display: grid;
    grid-template-columns: 322px 449px 149px 150px 1fr;
    height: 63px;
}

.paid-row > div:nth-child(4) {
    padding-left: 14px;
}

.paid-row .under {
    height: 35px;
}

.self {
    display: flex;
    align-items: center;
    padding: 8px 0 0 7px;
}

.firm {
    display: flex;
    height: 31px;
    line-height: 34px;
    padding-left: 24px;
    border-bottom: 2px solid #222;
}

.firm .tint {
    flex: 1;
    margin: 0 0 0 11px;
}

.firm-r {
    padding: 0 6px 0 10px;
    border-left: 1px solid #000;
}

.firm .field {
    width: 201px;
    border: none;
}

.form-foot {
    display: flex;
    justify-content: space-between;
    align-items: baseline;
    height: 31px;
    padding: 5px 19px 0 18px;
    background-color: #dcfffb;
    font-size: 18px;
}

.form-id {
    font-size: 16px;
}

.form-id b {
    font-size: 24px;
}

/* signature fields */
.sig {
    position: absolute;
    z-index: 2;
    width: 249px;
    height: 83px;
    border: 3px solid #000;
    background-color: #dce2ff;
    color: #fff;
    font-family: "Open Sans", "Noto Sans", sans-serif;
    display: flex;
    align-items: center;
    justify-content: center;
}

.sig-2 {
    left: 1241px;
    top: 177px;
}

.sig-3 {
    left: 561px;
    top: 263px;
}

.sig-tag {
    position: absolute;
    left: -3px;
    top: -4px;
    width: 145px;
    height: 42px;
    padding-left: 8px;
    background-color: #ff8c98;
    clip-path: polygon(0 0, 124px 0, 100% 50%, 124px 100%, 0 100%);
    font-size: 17px;
    line-height: 42px;
}

.sig-name {
    position: relative;
    width: 128px;
    padding-bottom: 2px;
    border-radius: 8px;
    background-color: rgba(64, 64, 68, 0.85);
    font-size: 22px;
    line-height: 48px;
    text-align: center;
}

.sig-3 .sig-name {
    background-color: rgba(157, 96, 244, 0.88);
}

.handles {
    position: absolute;
    left: -24px;
    top: -24px;
    width: 290px;
    height: 124px;
}

/* zoom and page bar */
.pager {
    position: absolute;
    z-index: 3;
    left: 567px;
    bottom: 53px;
    width: 818px;
    height: 70px;
    padding-left: 20px;
    border: 2px solid #dcdcdc;
    border-radius: 8px;
    background-color: #f7f7f7;
    box-shadow: 0 3px 8px rgba(0, 0, 0, 0.25);
    display: flex;
    align-items: center;
    gap: 27px;
}

.pager .icon-btn + .icon-btn {
    margin-left: 19px;
}

.zoom {
    display: flex;
    align-items: center;
    gap: 29px;
    margin: 0 5px 0 18px;
    color: #666;
}

.zoom select {
    appearance: none;
    width: 72px;
    font-size: 25px;
}

.pager-sep {
    width: 2px;
    height: 20px;
    background-color: #d4d4d4;
}

.page-no {
    width: 133px;
    height: 56px;
    border: 2px solid #dcdcdc;
    border-radius: 8px;
    background-color: #fff;
    color: #222;
    font-size: 27px;
    text-align: center;
    white-space: pre;
}

.off .o {
    stroke: #bdbdbd;
}
```
